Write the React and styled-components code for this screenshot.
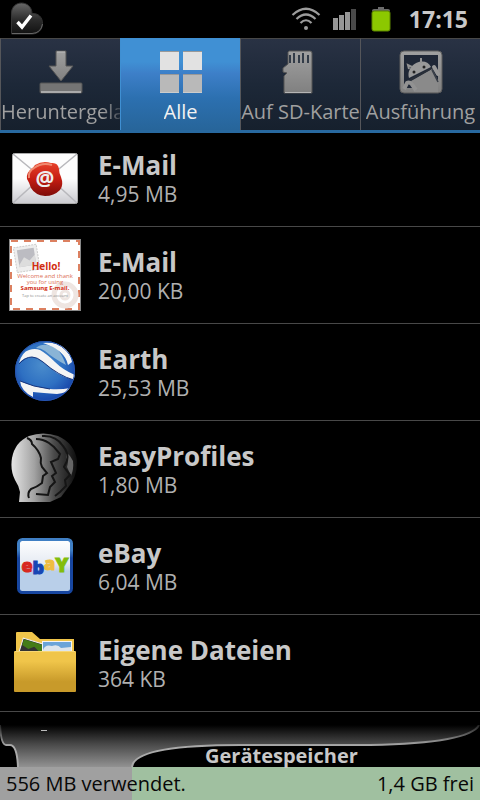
import React, { useState } from "react";
import styled, { createGlobalStyle } from "styled-components";

const tabs = [
  { id: "downloaded", label: "Heruntergeladen", icon: DownloadIcon, fade: true },
  { id: "all", label: "Alle", icon: GridIcon },
  { id: "sd", label: "Auf SD-Karte", icon: SdCardIcon },
  { id: "running", label: "Ausführung", icon: RobotIcon },
];

const apps = [
  { name: "E-Mail", size: "4,95 MB", icon: MailIcon },
  { name: "E-Mail", size: "20,00 KB", icon: HelloIcon },
  { name: "Earth", size: "25,53 MB", icon: EarthIcon },
  { name: "EasyProfiles", size: "1,80 MB", icon: ProfilesIcon },
  { name: "eBay", size: "6,04 MB", icon: EbayIcon },
  { name: "Eigene Dateien", size: "364 KB", icon: FolderIcon },
];

const storage = { used: "556 MB verwendet.", free: "1,4 GB frei", percent: 27.5 };

const App = () => {
  const [active, setActive] = useState("all");

  return (
    <Page>
      <GlobalStyle />
      <StatusBar>
        <Notification>
          <HeartIcon />
        </Notification>
        <WifiIcon />
        <SignalIcon />
        <BatteryIcon />
        <Clock>17:15</Clock>
      </StatusBar>
      <TabBar>
        {tabs.map(({ id, label, icon: Icon, fade }) => (
          <Tab key={id} $active={id === active} onClick={() => setActive(id)}>
            <Icon />
            <TabLabel $fade={fade}>{label}</TabLabel>
          </Tab>
        ))}
      </TabBar>
      <List>
        {apps.map(({ name, size, icon: Icon }, index) => (
          <Row key={index}>
            <Icon />
            <Info>
              <Name>{name}</Name>
              <Size>{size}</Size>
            </Info>
          </Row>
        ))}
      </List>
      <Storage>
        <StorageTop>
          <Swoosh />
          <StorageLabel>Gerätespeicher</StorageLabel>
        </StorageTop>
        <StorageBar style={{ "--used": `${storage.percent}%` }}>
          <span>{storage.used}</span>
          <span>{storage.free}</span>
        </StorageBar>
      </Storage>
    </Page>
  );
};

export default App;

function HeartIcon() {
  return (
    <svg width="34" height="34" viewBox="0 0 34 34">
      <defs>
        <linearGradient id="heart" x1="0" y1="0" x2="0" y2="1">
          <stop offset="0" stopColor="#686868" />
          <stop offset="0.55" stopColor="#2b2b2b" />
          <stop offset="1" stopColor="#111" />
        </linearGradient>
      </defs>
      <path
        d="M1.500 32V11C1.500 5 6 1 11.500 1S22 5 22 11.500C28 11 32.500 15 32.500 21.500S28 32 22 32Z"
        fill="url(#heart)"
        stroke="#333"
      />
      <path d="M2 31.500H22Q31 31 32.500 22" fill="none" stroke="#666" />
      <path d="M7.500 20L12 25L21 13.500" fill="none" stroke="#fff" strokeWidth="3.400" />
    </svg>
  );
}

function WifiIcon() {
  return (
    <svg width="30" height="26" viewBox="0 0 30 26" fill="none" stroke="#9c9c9c" strokeWidth="2.200">
      <path d="M1.500 9Q15-3.500 28.500 9" />
      <path d="M5.500 13Q15 4 24.500 13" />
      <path d="M9.500 17Q15 11.500 20.500 17" />
      <circle cx="15" cy="22" r="2" fill="#9c9c9c" stroke="none" />
    </svg>
  );
}

function SignalIcon() {
  return (
    <svg width="24" height="24" viewBox="0 0 24 24">
      <path d="M0 11h5v12H0zM6 8h5v15H6zM12 5h5v18h-5z" fill="#969696" />
      <path d="M18 2h5v21h-5z" fill="#4a4a4a" />
    </svg>
  );
}

function BatteryIcon() {
  return (
    <svg width="24" height="26" viewBox="0 0 24 26">
      <path d="M3 5Q3 3 5 3H9V1H15V3H19Q21 3 21 5Z" fill="#6b6b6b" />
      <rect x="3" y="5" width="18" height="20" rx="2" fill="#8cc800" stroke="#5d8500" />
    </svg>
  );
}

function Metal({ id }) {
  return (
    <linearGradient id={id} x1="0" y1="0" x2="0" y2="1">
      <stop offset="0" stopColor="#a0a0a0" />
      <stop offset="1" stopColor="#808080" />
    </linearGradient>
  );
}

function DownloadIcon() {
  return (
    <svg width="44" height="44" viewBox="0 0 44 44">
      <defs>
        <Metal id="down" />
      </defs>
      <path d="M17 1H27V16H34L22 31L10 16H17Z" fill="url(#down)" stroke="#555" />
      <path d="M18 2H26" stroke="#bbb" />
      <rect x="1" y="33" width="42" height="10" rx="1" fill="#747474" stroke="#555" />
      <path d="M2 42H42" stroke="#aaa" strokeWidth="2" />
    </svg>
  );
}

function GridIcon() {
  return (
    <svg width="44" height="44" viewBox="0 0 44 44">
      <path d="M1 1h19v19H1zM24 1h19v19H24z" fill="#e2e2e2" />
      <path d="M1 24h19v19H1zM24 24h19v19H24z" fill="#b9b9b9" />
      <path d="M1 1.500h19M24 1.500h19M1 24.500h19M24 24.500h19" stroke="#999" />
      <path d="M1 42.500h19M24 42.500h19" stroke="#ccc" />
    </svg>
  );
}

function SdCardIcon() {
  return (
    <svg width="44" height="44" viewBox="0 0 44 44">
      <defs>
        <Metal id="sd" />
      </defs>
      <path
        d="M10 1H31Q33 1 33 3V43H5V26L8 23L4 22V18L9 14V2Z"
        fill="url(#sd)"
        stroke="#555"
      />
      <path d="M11 5v8M15 3v10M20 5v8M24 3v10M29 5v8" stroke="#333c48" strokeWidth="2" />
      <path d="M6 42.500H32" stroke="#b5b5b5" />
    </svg>
  );
}

function RobotIcon() {
  return (
    <svg width="44" height="44" viewBox="0 0 44 44">
      <defs>
        <Metal id="robot" />
      </defs>
      <rect x="1" y="1" width="42" height="42" rx="4" fill="url(#robot)" stroke="#5c5c5c" />
      <path d="M5 5H39V38H5Z" fill="#1f2736" />
      <path d="M12 31L33 19L39 31V42H15Z" fill="#8a8a8a" />
      <path d="M10 28C6 15 26 5 32 17Z" fill="#999" />
      <path d="M11 30L33 18" stroke="#2a2f38" strokeWidth="1.500" />
      <path d="M33 20L39 32" stroke="#3a3f48" strokeWidth="1.500" />
      <path d="M13 17L9 15L10 19M22 13V8" fill="none" stroke="#929292" strokeWidth="2" />
      <path d="M35 17L39 24" stroke="#999" strokeWidth="4" strokeLinecap="round" />
      <path d="M5 39L8 33Q11 31 14 36L17 40" fill="none" stroke="#929292" strokeWidth="4" />
      <circle cx="15" cy="22" r="1.500" fill="#222" />
      <circle cx="25" cy="17" r="1.500" fill="#222" />
    </svg>
  );
}

function MailIcon() {
  return (
    <AppIcon viewBox="0 0 72 72">
      <defs>
        <linearGradient id="paper" x1="0" y1="0" x2="0" y2="1">
          <stop offset="0.5" stopColor="#fdfdfd" />
          <stop offset="1" stopColor="#cbcbd0" />
        </linearGradient>
        <linearGradient id="seal" x1="0" y1="0" x2="0" y2="1">
          <stop offset="0" stopColor="#e9442c" />
          <stop offset="0.5" stopColor="#c51d12" />
          <stop offset="1" stopColor="#7e0c08" />
        </linearGradient>
      </defs>
      <rect x="3.500" y="11.500" width="65" height="50" rx="2" fill="url(#paper)" stroke="#aaa" />
      <path d="M4 12L27 31M68 12L45 31M4 61L27 40M68 61L45 40" stroke="#b8b8bc" strokeWidth="1.500" />
      <path
        d="M26 23Q34 18 42 21Q49 20 50 27Q50 31 52 35Q55 43 51 48Q45 54 36 54Q26 53 22 46Q20 40 18 37Q17 30 23 27Z"
        fill="url(#seal)"
      />
      <path d="M20 36Q19 29 25 26Q33 20 43 23" fill="none" stroke="#f08a70" strokeWidth="2" />
      <text x="36" y="44" textAnchor="middle" fontSize="21" fontWeight="700" fill="#eee">
        @
      </text>
    </AppIcon>
  );
}

function HelloIcon() {
  return (
    <AppIcon viewBox="0 0 72 72">
      <rect x="0.500" y="0.500" width="71" height="71" fill="#fff" stroke="#888" />
      <rect x="2" y="2" width="68" height="68" fill="none" stroke="#dc8060" strokeWidth="2" strokeDasharray="7 6" />
      <g transform="rotate(-9 17 18)">
        <rect x="6" y="7" width="23" height="25" fill="#eee" stroke="#ccc" strokeDasharray="2 1" />
        <rect x="9" y="10" width="17" height="17" fill="#bcbcc2" />
        <path d="M9 25L15 18L20 22L26 17V27H9Z" fill="#ddd" />
      </g>
      <circle cx="56" cy="56" r="11" fill="none" stroke="#eee5e1" strokeWidth="5" />
      <circle cx="56" cy="56" r="4" fill="none" stroke="#eee5e1" strokeWidth="3" />
      <text textAnchor="middle" fontSize="6" fill="#dc7058">
        <tspan x="37" y="31" fontSize="10" fontWeight="700" fill="#d22d12">
          Hello!
        </tspan>
        <tspan x="36" y="39">
          Welcome and thank
        </tspan>
        <tspan x="36" y="45">
          you for using
        </tspan>
        <tspan x="36" y="51" fontWeight="700" fill="#d22d12">
          Samsung E-mail.
        </tspan>
        <tspan x="36" y="58" fontSize="4" fill="#888">
          Tap to create an account
        </tspan>
      </text>
    </AppIcon>
  );
}

function EarthIcon() {
  return (
    <AppIcon viewBox="0 0 72 72">
      <defs>
        <radialGradient id="globe" cx="0.45" cy="0.4" r="0.6">
          <stop offset="0" stopColor="#4a8ccc" />
          <stop offset="0.6" stopColor="#2e70c2" />
          <stop offset="1" stopColor="#1746aa" />
        </radialGradient>
        <clipPath id="globeClip">
          <circle cx="36" cy="35" r="30" />
        </clipPath>
      </defs>
      <circle cx="36" cy="35" r="30" fill="url(#globe)" />
      <g clipPath="url(#globeClip)">
        <path d="M27 12Q35 5 48 13Q53 18 57 29Q44 22 36 15Q32 12 27 12Z" fill="#8ab4d6" />
        <g fill="#f4f4f4">
          <path d="M34 7Q60 5 63 26L59 29Q56 14 34 7Z" />
          <path d="M10 27Q13 16 20 14Q26 12 31 14Q38 18 46 26Q54 34 66 39L65 44Q56 42 48 37Q40 31 34 26Q28 21 23 21Q15 21 10 27Z" />
          <path d="M11 45Q24 51 41 53Q50 54 62 52Q58 57 48 58Q34 57 24 56L24 61Q12 55 11 45Z" />
        </g>
        <path d="M10 28Q16 21 23 21Q28 21 34 26Q50 40 65 44M11 45Q24 51 41 53" fill="none" stroke="#17347c" />
      </g>
      <circle cx="36" cy="35" r="29.500" fill="none" stroke="#2754ae" />
    </AppIcon>
  );
}

function ProfilesIcon() {
  return (
    <AppIcon viewBox="0 0 72 72">
      <defs>
        <linearGradient id="heads">
          <stop offset="0" stopColor="#e6e6e6" />
          <stop offset="0.35" stopColor="#a2a2a2" />
          <stop offset="0.65" stopColor="#4a4a4a" />
          <stop offset="1" stopColor="#0c0c0c" />
        </linearGradient>
      </defs>
      <path
        d="M10 69L11 59Q10 53 6 47Q1 37 3 25Q6 9 20 3Q34-2 49 3Q65 10 68 27Q69 44 58 56L52 64L41 69Z"
        fill="url(#heads)"
      />
      <path d="M57 25Q60 28 58 34L62 43Q65 36 64 28Q62 23 57 19Z" fill="#666" />
      <g fill="none" stroke="#151515" strokeWidth="2">
        <path d="M18 5Q23 7 23 11Q30 17 32 25Q31 30 33 34L38 40L34 43L33 50Q28 54 22 56Q18 60 20 65" />
        <path d="M27 6Q34 6 40 10L45 14L51 21L49 26L42 29L47 40L43 43L46 49L41 54L39 62L27 61" />
        <path d="M33 3Q47 2 54 13Q60 20 58 28L55 34L61 42L56 47L57 53L51 59L46 63" />
      </g>
    </AppIcon>
  );
}

function EbayIcon() {
  return (
    <AppIcon viewBox="0 0 72 72">
      <defs>
        <linearGradient id="ebay" x1="0" y1="0" x2="0" y2="1">
          <stop offset="0" stopColor="#fff" />
          <stop offset="0.45" stopColor="#e6ebf3" />
          <stop offset="0.6" stopColor="#b9cfe9" />
        </linearGradient>
        <linearGradient id="ebayFrame" x1="0" y1="0" x2="0" y2="1">
          <stop offset="0.2" stopColor="#407fc4" />
          <stop offset="0.35" stopColor="#1746a0" />
        </linearGradient>
      </defs>
      <rect x="9.500" y="9.500" width="53" height="53" rx="4" fill="url(#ebay)" stroke="url(#ebayFrame)" strokeWidth="3" />
      <text x="36" y="42" textAnchor="middle" fontSize="18" fontWeight="800">
        <tspan fill="#d82820" stroke="#d82820">
          e
        </tspan>
        <tspan dy="2" fill="#1746b4" stroke="#1746b4">
          b
        </tspan>
        <tspan dy="-4" fill="#efbd40" stroke="#efbd40">
          a
        </tspan>
        <tspan dy="2" fontSize="20" fill="#82bd0c" stroke="#82bd0c">
          Y
        </tspan>
      </text>
    </AppIcon>
  );
}

function FolderIcon() {
  return (
    <AppIcon viewBox="0 0 72 72">
      <defs>
        <linearGradient id="folder" x1="0" y1="0" x2="0" y2="1">
          <stop offset="0.25" stopColor="#f0c54a" />
          <stop offset="0.75" stopColor="#c89a2a" />
        </linearGradient>
      </defs>
      <path d="M7 27V6Q7 5 8 5H23L31 12H65V27Z" fill="#f0c54a" />
      <g transform="rotate(17 14 12)">
        <rect x="14" y="11" width="25" height="20" fill="#333" stroke="#f4f4f4" />
        <path d="M15 12H38V22L27 16L22 20L15 18Z" fill="#447c18" />
      </g>
      <rect x="33.500" y="14.500" width="29" height="15" fill="#6aa4d8" stroke="#f4f4f4" />
      <path d="M34 23Q36 17 43 19Q49 17 52 21L62 20V28H34Z" fill="#dde5ec" />
      <rect x="5" y="24" width="62" height="41" rx="1" fill="url(#folder)" />
      <path d="M6 24.500H66" stroke="#f8d774" />
    </AppIcon>
  );
}

function Swoosh() {
  return (
    <SwooshSvg viewBox="0 0 480 42" preserveAspectRatio="none">
      <defs>
        <linearGradient id="swoosh" x1="0" y1="0" x2="0" y2="1">
          <stop offset="0" stopColor="#000" />
          <stop offset="0.45" stopColor="#484848" />
          <stop offset="1" stopColor="#929292" />
        </linearGradient>
        <linearGradient id="edge" x1="0" y1="0" x2="0" y2="1">
          <stop offset="0" stopColor="#222" />
          <stop offset="0.5" stopColor="#aaa" />
        </linearGradient>
      </defs>
      <path
        d="M0 0Q1 20 6 20H10Q17 20 18 42H132Q134 20 240 20H370Q470 18 479 0Z"
        fill="url(#swoosh)"
      />
      <path
        d="M0 0Q1 20 6 20H10Q17 20 18 42M132 42Q134 20 240 20H370Q470 18 479 0"
        fill="none"
        stroke="url(#edge)"
        strokeWidth="2"
      />
      <path d="M41 5.500H47" stroke="#bbb" />
    </SwooshSvg>
  );
}

const GlobalStyle = createGlobalStyle`
  * {
    box-sizing: border-box;
  }

  body {
    margin: 0;
    background: #000;
    font-family: "Open Sans", "Noto Sans", sans-serif;
  }

  svg {
    display: block;
    flex-shrink: 0;
  }
`;

const Page = styled.div`
  display: flex;
  flex-direction: column;
  height: 100vh;
  overflow: hidden;
  background: #000;
`;

const StatusBar = styled.header`
  display: flex;
  align-items: center;
  gap: 12px;
  height: 38px;
  flex-shrink: 0;
  padding: 0 12px 0 10px;
`;

const Notification = styled.div`
  flex: 1;
`;

const Clock = styled.time`
  margin-left: 4px;
  font-size: 23px;
  font-weight: 700;
  color: #c8c8c8;
`;

const TabBar = styled.nav`
  position: relative;
  z-index: 1;
  display: grid;
  grid-template-columns: repeat(4, minmax(0, 1fr));
  height: 95px;
  flex-shrink: 0;
  border-bottom: 3px solid #2869a0;
`;

const Tab = styled.button`
  display: flex;
  flex-direction: column;
  align-items: center;
  gap: 4px;
  padding: 11px 0 0;
  border: none;
  border-top: 1px solid ${({ $active }) => ($active ? "#3f8fd2" : "#484848")};
  border-left: 1px solid ${({ $active }) => ($active ? "#3f8fd2" : "#55565a")};
  background: ${({ $active }) =>
    $active
      ? "linear-gradient(#4090d4 25%, #3d7fc8 38%, #2c70b0 65%, #27659a)"
      : "linear-gradient(#293244, #1d2838 50%, #16202d)"};
  color: ${({ $active }) => ($active ? "#f2f2f2" : "#a0a0a0")};
  font-family: inherit;
  cursor: pointer;
`;

const TabLabel = styled.span`
  max-width: 100%;
  overflow: hidden;
  white-space: nowrap;
  font-size: 20px;
  line-height: 28px;
  mask-image: ${({ $fade }) => ($fade ? "linear-gradient(to right, #000 85%, rgba(0, 0, 0, 0.3))" : "none")};
`;

const List = styled.ul`
  flex: 1;
  min-height: 0;
  margin: -3px 0 0;
  padding: 0;
  overflow: hidden;
  list-style: none;
`;

const Row = styled.li`
  display: flex;
  align-items: center;
  gap: 17px;
  height: 97px;
  padding-left: 9px;
  border-bottom: 1px solid #484848;
`;

const AppIcon = styled.svg`
  width: 72px;
  height: 72px;
`;

const Info = styled.div`
  display: flex;
  flex-direction: column;
  gap: 1px;
  margin-bottom: 1px;
`;

const Name = styled.span`
  font-size: 26px;
  font-weight: 700;
  line-height: 32px;
  color: #c8c8c8;
`;

const Size = styled.span`
  font-size: 21px;
  line-height: 24px;
  color: #b0b0b0;
`;

const Storage = styled.footer`
  flex-shrink: 0;
`;

const StorageTop = styled.div`
  display: grid;
  height: 42px;

  > * {
    grid-area: 1 / 1;
  }
`;

const SwooshSvg = styled.svg`
  width: 100%;
  height: 42px;
`;

const StorageLabel = styled.span`
  z-index: 1;
  align-self: end;
  padding-left: 205px;
  font-size: 20px;
  font-weight: 700;
  line-height: 22px;
  color: #c8c8c8;
`;

const StorageBar = styled.div`
  display: flex;
  align-items: center;
  justify-content: space-between;
  height: 33px;
  padding: 0 6px;
  font-size: 20px;
  color: #080808;
  background: linear-gradient(to right, #a0a0a0 var(--used), #a0c0a0 var(--used));
`;
